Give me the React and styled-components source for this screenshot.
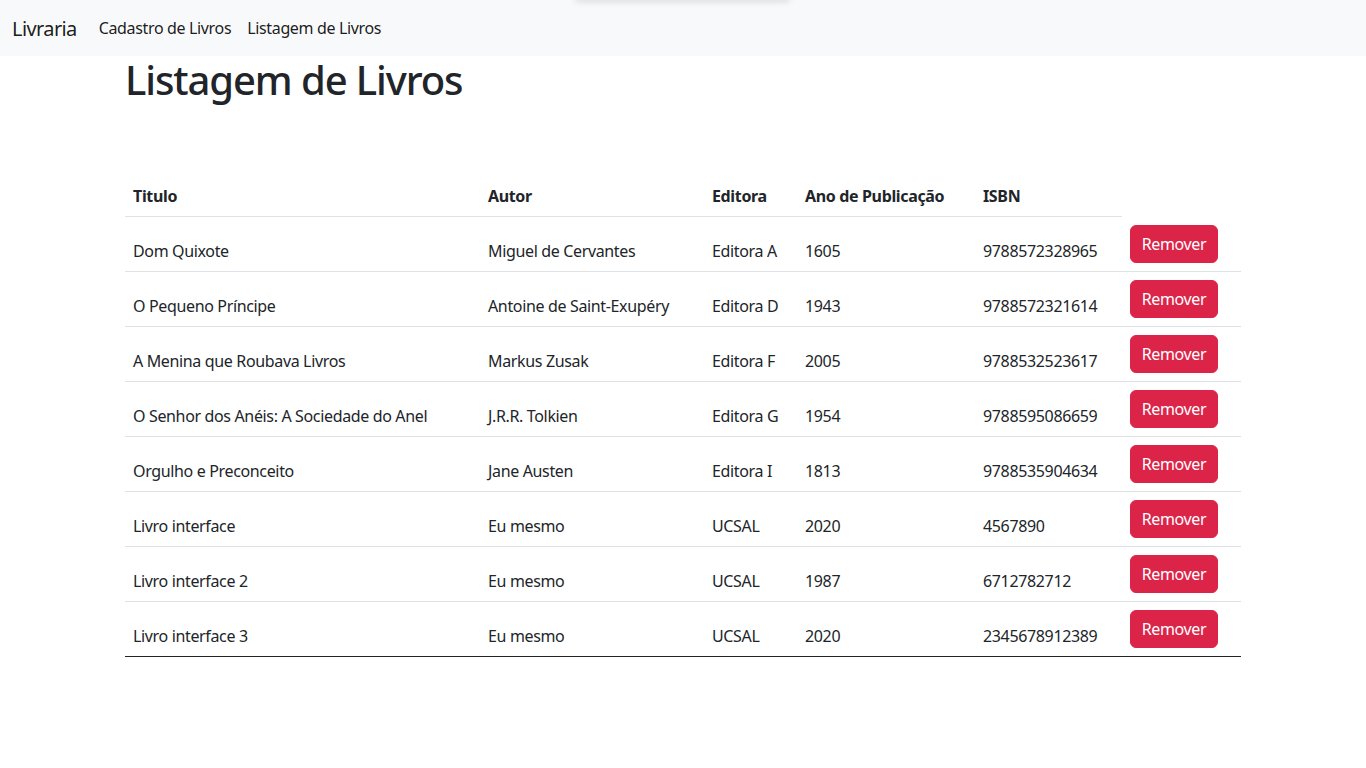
import React from 'react';
import styled, { createGlobalStyle } from 'styled-components';

const GlobalStyle = createGlobalStyle`
  body {
    margin: 0;
    font-family: "Segoe UI", "Noto Sans", "Liberation Sans", sans-serif;
    font-size: 16px;
    line-height: 1.5;
    letter-spacing: -0.35px;
    color: #212529;
    background: #fff;
  }
`;

const Navbar = styled.nav`
  position: relative;
  height: 56px;
  background: #f8f9fa;
  display: flex;
  align-items: center;
  padding: 0 12px;
  box-sizing: border-box;
`;

const TopShade = styled.div`
  position: absolute;
  top: -6px;
  left: 575px;
  width: 215px;
  height: 6px;
  border-radius: 4px;
  box-shadow: 0 2px 6px rgba(0, 0, 0, 0.12);
`;

const Brand = styled.a`
  font-size: 20px;
  line-height: 30px;
  letter-spacing: -0.6px;
  color: rgba(0, 0, 0, 0.9);
  margin-right: 14px;
  padding-top: 1px;
  text-decoration: none;
`;

const NavLinks = styled.div`
  display: flex;
`;

const NavLink = styled.a`
  padding: 8px;
  line-height: 24px;
  color: rgba(0, 0, 0, 0.9);
  text-decoration: none;
`;

const Container = styled.main`
  width: 1140px;
  margin: 0 auto;
  padding: 0 12px;
  box-sizing: border-box;
`;

const Title = styled.h1`
  margin: 0 0 72px;
  font-size: 40px;
  font-weight: 500;
  line-height: 48px;
  letter-spacing: -1.1px;
`;

const Table = styled.table`
  width: 100%;
  border-collapse: collapse;
  table-layout: fixed;
`;

const Th = styled.th`
  box-sizing: border-box;
  width: ${p => p.$w}px;
  text-align: left;
  font-weight: 700;
  padding: 8px;
  line-height: 24px;
  border-bottom: ${p => (p.$blank ? 'none' : '1px solid #dee2e6')};
`;

const Row = styled.tr`
  border-bottom: 1px solid ${p => (p.$last ? '#212529' : '#dee2e6')};
`;

const Td = styled.td`
  box-sizing: border-box;
  padding: 8px;
  line-height: 24px;
  vertical-align: bottom;
  white-space: nowrap;
`;

const ActionTd = styled(Td)`
  vertical-align: top;
`;

const RemoveButton = styled.button`
  font-family: inherit;
  font-size: 16px;
  line-height: 24px;
  letter-spacing: -0.35px;
  width: 88px;
  padding: 6px 0;
  color: #fff;
  background: #dc2448;
  border: 1px solid #dc2448;
  border-radius: 6px;
  cursor: pointer;
`;

const books = [
  ['Dom Quixote', 'Miguel de Cervantes', 'Editora A', '1605', '9788572328965'],
  ['O Pequeno Príncipe', 'Antoine de Saint-Exupéry', 'Editora D', '1943', '9788572321614'],
  ['A Menina que Roubava Livros', 'Markus Zusak', 'Editora F', '2005', '9788532523617'],
  ['O Senhor dos Anéis: A Sociedade do Anel', 'J.R.R. Tolkien', 'Editora G', '1954', '9788595086659'],
  ['Orgulho e Preconceito', 'Jane Austen', 'Editora I', '1813', '9788535904634'],
  ['Livro interface', 'Eu mesmo', 'UCSAL', '2020', '4567890'],
  ['Livro interface 2', 'Eu mesmo', 'UCSAL', '1987', '6712782712'],
  ['Livro interface 3', 'Eu mesmo', 'UCSAL', '2020', '2345678912389'],
];

const columns = [
  ['Titulo', 355],
  ['Autor', 224],
  ['Editora', 93],
  ['Ano de Publicação', 178],
  ['ISBN', 147],
];

function App() {
  return (
    <>
      <GlobalStyle />
      <Navbar>
        <TopShade />
        <Brand href="#">Livraria</Brand>
        <NavLinks>
          <NavLink href="#">Cadastro de Livros</NavLink>
          <NavLink href="#">Listagem de Livros</NavLink>
        </NavLinks>
      </Navbar>
      <Container>
        <Title>Listagem de Livros</Title>
        <Table>
          <thead>
            <tr>
              {columns.map(([label, w]) => (
                <Th key={label} $w={w}>{label}</Th>
              ))}
              <Th $w={119} $blank />
            </tr>
          </thead>
          <tbody>
            {books.map((book, i) => (
              <Row key={i} $last={i === books.length - 1}>
                {book.map((cell, j) => (
                  <Td key={j}>{cell}</Td>
                ))}
                <ActionTd>
                  <RemoveButton>Remover</RemoveButton>
                </ActionTd>
              </Row>
            ))}
          </tbody>
        </Table>
      </Container>
    </>
  );
}

export default App;
